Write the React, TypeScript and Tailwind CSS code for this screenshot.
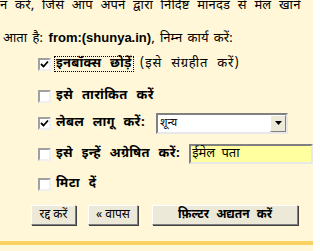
import React from "react";

const font = { fontFamily: '"Noto Sans Devanagari", "Lohit Devanagari", "Noto Sans", "Liberation Sans", sans-serif' };

function Check({ checked }: { checked?: boolean }) {
  return (
    <span className="inline-flex w-[13px] h-[13px] shrink-0 items-center justify-center bg-white border-2 border-t-[#a0a0a0] border-l-[#a0a0a0] border-r-[#f0f0f0] border-b-[#f0f0f0]">
      {checked && (
        <svg width="9" height="9" viewBox="0 0 9 9">
          <path d="M1 4 L3.5 6.5 L8 1.5" stroke="#000" strokeWidth="1.8" fill="none" />
        </svg>
      )}
    </span>
  );
}

function Btn({ children, className = "", bold }: { children: React.ReactNode; className?: string; bold?: boolean }) {
  return (
    <button
      className={
        "h-[20px] bg-[#ece9d8] border border-t-white border-l-white border-r-[#808080] border-b-[#808080] shadow-[1px_1px_0_#404040] text-[12px] leading-none text-black flex items-center justify-center whitespace-nowrap " +
        (bold ? "font-bold [word-spacing:4px] " : "") +
        className
      }
      style={font}
    >
      {children}
    </button>
  );
}

export default function App() {
  return (
    <div className="w-[313px] h-[251px] bg-[#fff7d7] overflow-hidden text-black" style={font}>
      <div className="h-[14px] -mt-[2px] text-[13px] leading-[16px] whitespace-nowrap [word-spacing:4px] tracking-[0.2px]">
        न करें, जिसे आप अपने द्वारा निर्दिष्ट मानदंड से मेल खाने
      </div>
      <div className="mt-[18px] h-[16px] text-[13px] leading-[16px] whitespace-nowrap pl-[3px] [word-spacing:2px]">
        आता है: <b className="[word-spacing:0px]" style={{ fontFamily: '"Liberation Sans", Arial, sans-serif' }}>from:(shunya.in)</b>, निम्न कार्य करें:
      </div>
      <div className="mt-[8px] pl-[38px] flex flex-col">
        <div className="h-[20px] flex items-center gap-[3px] text-[13px] whitespace-nowrap [word-spacing:5px]">
          <Check checked />
          <span className="font-bold border border-dotted border-black px-[1px] leading-[14px] tracking-[0.3px]">इनबॉक्स छोड़ें</span>
          <span className="ml-[3px] tracking-[0.8px]">(इसे संग्रहीत करें)</span>
        </div>
        <div className="mt-[12px] h-[20px] flex items-center gap-[5px] text-[13px] font-bold whitespace-nowrap [word-spacing:5px] tracking-[0.4px]">
          <Check />
          <span>इसे तारांकित करें</span>
        </div>
        <div className="mt-[6px] h-[22px] flex items-center text-[13px] whitespace-nowrap">
          <Check checked />
          <span className="font-bold ml-[5px] w-[100px] [word-spacing:5px] tracking-[0.3px]">लेबल लागू करें:</span>
          <div className="w-[132px] h-[21px] bg-white border-2 border-t-[#808080] border-l-[#808080] border-r-[#e8e8e8] border-b-[#e8e8e8] flex items-center">
            <span className="flex-1 pl-[2px] text-[11px]">शून्य</span>
            <span className="w-[16px] h-[17px] bg-[#ece9d8] border border-t-white border-l-white border-r-[#808080] border-b-[#808080] flex items-center justify-center">
              <svg width="7" height="4" viewBox="0 0 7 4"><path d="M0 0 H7 L3.5 4 Z" fill="#000" /></svg>
            </span>
          </div>
        </div>
        <div className="mt-[10px] h-[20px] flex items-center text-[13px] whitespace-nowrap">
          <Check />
          <span className="font-bold ml-[5px] w-[140px] [word-spacing:5px] tracking-[0.3px]">इसे इन्हें अग्रेषित करें:</span>
          <div className="w-[130px] h-[20px] bg-[#ffffa0] border-2 border-t-[#808080] border-l-[#808080] border-r-[#e8e8e8] border-b-[#e8e8e8] flex items-center pl-[1px] text-[13px] [word-spacing:3px]">
            ईमेल पता
          </div>
        </div>
        <div className="mt-[10px] h-[20px] flex items-center gap-[5px] text-[13px] font-bold whitespace-nowrap [word-spacing:5px] tracking-[0.4px]">
          <Check />
          <span>मिटा दें</span>
        </div>
      </div>
      <div className="mt-[11px] pl-[31px] flex items-center">
        <Btn className="w-[45px]">रद्द करें</Btn>
        <Btn className="w-[50px] ml-[12px]">« वापस</Btn>
        <Btn className="w-[146px] ml-[14px]" bold>फ़िल्टर अद्यतन करें</Btn>
      </div>
      <div className="mt-[16px] h-[4px] bg-[#fad163]" />
    </div>
  );
}
